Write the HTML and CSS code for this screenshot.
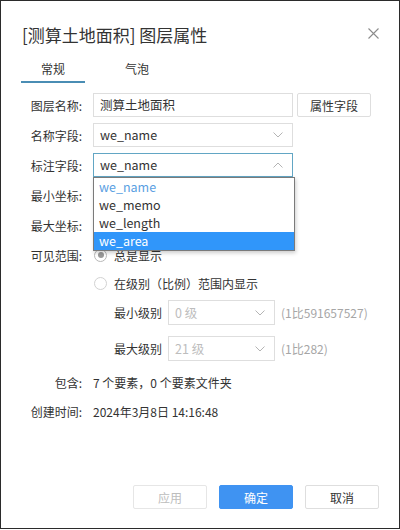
FILE: index.html
```html
<!DOCTYPE html>
<html lang="zh-CN">
<head>
    <meta charset="UTF-8">
    <meta name="viewport" content="width=device-width, initial-scale=1.0">
    <title>图层属性</title>
    <link rel="stylesheet" href="styles.css">
</head>
<body>
    <div class="dialog">
        <div class="header">
            <span class="title">[测算土地面积] 图层属性</span>
            <svg class="close" width="11" height="11" viewBox="0 0 11 11"><path d="M0.5 0.5 L10.5 10.5 M10.5 0.5 L0.5 10.5" stroke="#8c8c8c" stroke-width="1.1" fill="none"/></svg>
        </div>

        <div class="tabs">
            <div class="tab active">常规</div>
            <div class="tab">气泡</div>
        </div>

        <div class="form">
            <div class="row">
                <span class="label">图层名称:</span>
                <div class="input">测算土地面积</div>
                <button class="btn field-btn">属性字段</button>
            </div>
            <div class="row">
                <span class="label">名称字段:</span>
                <div class="input select">we_name
                    <svg class="arrow" width="10" height="6" viewBox="0 0 10 6"><polyline points="0.5,0.5 5,5 9.5,0.5" stroke="#b4b4b4" fill="none"/></svg>
                </div>
            </div>
            <div class="row open">
                <span class="label">标注字段:</span>
                <div class="input select focus">we_name
                    <svg class="arrow" width="10" height="6" viewBox="0 0 10 6"><polyline points="0.5,5.5 5,1 9.5,5.5" stroke="#b4b4b4" fill="none"/></svg>
                </div>
                <!-- 下拉列表 -->
                <ul class="dropdown">
                    <li class="current">we_name</li>
                    <li>we_memo</li>
                    <li>we_length</li>
                    <li class="hover">we_area</li>
                </ul>
            </div>
            <div class="row">
                <span class="label">最小坐标:</span>
                <div class="input"></div>
            </div>
            <div class="row">
                <span class="label">最大坐标:</span>
                <div class="input"></div>
            </div>
            <div class="row radio-row">
                <span class="label">可见范围:</span>
                <span class="radio checked"></span>
                <span>总是显示</span>
            </div>
            <div class="row radio-row">
                <span class="label"></span>
                <span class="radio"></span>
                <span>在级别（比例）范围内显示</span>
            </div>
            <div class="row level-row first">
                <span class="level-label">最小级别</span>
                <div class="input select disabled">0 级
                    <svg class="arrow" width="10" height="6" viewBox="0 0 10 6"><polyline points="0.5,0.5 5,5 9.5,0.5" stroke="#b4b4b4" fill="none"/></svg>
                </div>
                <span class="hint">(1比591657527)</span>
            </div>
            <div class="row level-row">
                <span class="level-label">最大级别</span>
                <div class="input select disabled">21 级
                    <svg class="arrow" width="10" height="6" viewBox="0 0 10 6"><polyline points="0.5,0.5 5,5 9.5,0.5" stroke="#b4b4b4" fill="none"/></svg>
                </div>
                <span class="hint">(1比282)</span>
            </div>
            <div class="row info-row first">
                <span class="label">包含:</span>
                <span class="value">7 个要素，0 个要素文件夹</span>
            </div>
            <div class="row info-row">
                <span class="label">创建时间:</span>
                <span class="value">2024年3月8日 14:16:48</span>
            </div>
        </div>

        <div class="footer">
            <button class="btn" disabled>应用</button>
            <button class="btn primary">确定</button>
            <button class="btn">取消</button>
        </div>
    </div>
</body>
</html>
```

FILE: styles.css
```css
* {
    box-sizing: border-box;
}

body {
    margin: 0;
    padding: 0;
    font-family: "Microsoft YaHei", "Noto Sans CJK SC", sans-serif;
    font-size: 12px;
    color: #333;
    background: #fff;
}

.dialog {
    width: 400px;
    height: 529px;
    border: 1px solid #2b2b2b;
    display: flex;
    flex-direction: column;
    background: #fff;
}

.header {
    display: flex;
    align-items: center;
    justify-content: space-between;
    height: 26px;
    margin-top: 21px;
    padding: 0 20px 0 21px;
}

.title {
    font-size: 17px;
    color: #333;
    line-height: 26px;
}

.close {
    margin-top: -4px;
}

.tabs {
    display: flex;
    gap: 20px;
    padding-left: 20px;
}

.tab {
    width: 64px;
    text-align: center;
    padding-top: 12px;
    padding-bottom: 3px;
    line-height: 18px;
    border-bottom: 2px solid transparent;
    color: #333;
}

.tab.active {
    border-bottom-color: #4a8db4;
}

.form {
    padding: 10px 0 0 21px;
}

.row {
    display: flex;
    align-items: center;
    height: 24px;
    margin-bottom: 6px;
    position: relative;
}

.label {
    width: 60px;
    margin-right: 11px;
    text-align: right;
    flex-shrink: 0;
}

.input {
    width: 200px;
    height: 24px;
    border: 1px solid #dedede;
    padding: 0 9px 0 6px;
    line-height: 22px;
    display: flex;
    align-items: center;
    justify-content: space-between;
    color: #333;
    font-size: 12.5px;
}

.input.focus {
    border-color: #62a6c4;
}

.btn {
    font-family: inherit;
    font-size: 12px;
    height: 24px;
    width: 74px;
    border: 1px solid #dedede;
    border-radius: 2px;
    background: #fff;
    color: #333;
    padding: 0;
}

.field-btn {
    margin-left: 4px;
}

.dropdown {
    position: absolute;
    top: 24px;
    left: 71px;
    width: 202px;
    margin: 0;
    padding: 0;
    list-style: none;
    background: #fff;
    border: 1px solid #7a7a7a;
    box-shadow: 1px 2px 4px rgba(0, 0, 0, 0.2);
    z-index: 2;
}

.dropdown li {
    height: 18px;
    line-height: 18px;
    padding-left: 5px;
    font-size: 12.5px;
    color: #333;
}

.dropdown li.current {
    color: #5aa0e2;
}

.dropdown li.hover {
    background: #3096fa;
    color: #fff;
}

.radio-row {
    margin-bottom: 4px;
}

.row.radio-row:first-of-type {
    margin-top: 0;
}

.radio {
    width: 13px;
    height: 13px;
    border: 1px solid #d2d2d2;
    border-radius: 50%;
    margin-left: 1px;
    margin-right: 7px;
    position: relative;
}

.radio.checked {
    border-color: #b8b8b8;
}

.radio.checked::after {
    content: "";
    position: absolute;
    left: 2.5px;
    top: 2.5px;
    width: 6px;
    height: 6px;
    border-radius: 50%;
    background: #9a9a9a;
}

.level-row {
    height: 25px;
    padding-left: 92px;
    margin-bottom: 11px;
}

.level-row.first {
    margin-top: 5px;
}

.level-label {
    margin-right: 6px;
}

.level-row .input {
    width: 107px;
    height: 25px;
}

.input.disabled {
    color: #bdbdbd;
}

.hint {
    margin-left: 6px;
    color: #a6a6a6;
}

.info-row {
    margin-bottom: 5px;
}

.info-row.first {
    margin-top: -2px;
}

.footer {
    margin-top: auto;
    display: flex;
    justify-content: flex-end;
    gap: 12px;
    padding: 0 20px 19px 0;
}

.btn[disabled] {
    color: #bdbdbd;
    border-color: #e6e6e6;
}

.btn.primary {
    background: #3f93f2;
    border-color: #3f93f2;
    color: #fff;
}
```
